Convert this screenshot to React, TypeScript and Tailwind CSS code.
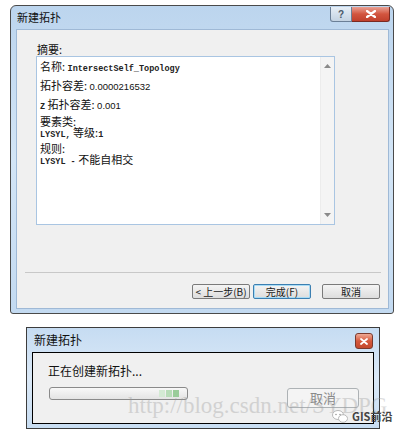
import React from "react";

const cjk = "font-['Noto_Sans_CJK_SC','Microsoft_YaHei',sans-serif]";
const mono = "font-['Liberation_Mono',monospace] font-bold text-[8.5px] text-[#222]";

const WinButton: React.FC<{ label: string; focused?: boolean; className?: string }> = ({
  label,
  focused,
  className,
}) => (
  <div
    className={
      "h-[15px] flex items-center justify-center rounded-[2px] border text-[10px] leading-none text-[#1a1a1a] bg-gradient-to-b from-[#f4f4f4] to-[#dddddd] " +
      (focused ? "border-[#3c7fb1] shadow-[inset_0_0_0_1px_#a8dcf6] " : "border-[#7a7a7a] ") +
      (className || "")
    }
  >
    {label}
  </div>
);

const SummaryBox: React.FC = () => (
  <div className="ml-[19px] w-[299px] h-[169px] border border-[#a9c5e2] bg-white flex">
    <div className={"flex-1 pl-[3px] pt-[3px] text-[11px] leading-[12px] text-[#111] " + cjk}>
      <div className="h-[12px] whitespace-nowrap">
        名称:&nbsp;<span className={mono}>IntersectSelf_Topology</span>
      </div>
      <div className="h-[12px] mt-[7px] whitespace-nowrap">
        拓扑容差:&nbsp;
        <span className="font-['Liberation_Sans',sans-serif] text-[9.5px]">0.0000216532</span>
      </div>
      <div className="h-[12px] mt-[7px] whitespace-nowrap">
        <span className={mono}>Z</span>&nbsp;拓扑容差:&nbsp;
        <span className="font-['Liberation_Sans',sans-serif] text-[9.5px]">0.001</span>
      </div>
      <div className="h-[11px] mt-[6px] leading-[11px]">要素类:</div>
      <div className="h-[11px] leading-[11px] whitespace-nowrap">
        <span className={mono}>LYSYL,</span>&nbsp;等级:<span className={mono}>1</span>
      </div>
      <div className="h-[11px] mt-[5px] leading-[11px]">规则:</div>
      <div className="h-[11px] leading-[11px] whitespace-nowrap">
        <span className={mono}>LYSYL -</span>&nbsp;不能自相交
      </div>
    </div>
    <div className="w-[14px] bg-[#f4f4f4] border-l border-[#ececec] flex flex-col items-center justify-between py-[7px]">
      <svg width="7" height="4" viewBox="0 0 7 4">
        <path d="M0 4 L3.5 0 L7 4 Z" fill="#8a8a8a" />
      </svg>
      <svg width="7" height="4" viewBox="0 0 7 4">
        <path d="M0 0 L3.5 4 L7 0 Z" fill="#8a8a8a" />
      </svg>
    </div>
  </div>
);

const MainDialog: React.FC = () => (
  <div className="ml-[10px] mt-[5px] w-[384px] h-[309px] rounded-t-[6px] rounded-b-[3px] border border-[#4a4a4a] bg-gradient-to-b from-[#bcd5ee] via-[#d3e5f6] to-[#c3daf1] flex flex-col">
    <div className="h-[23px] flex items-start justify-between">
      <div className={"pl-[6px] pt-[6px] text-[11px] leading-none text-[#111] " + cjk}>新建拓扑</div>
      <div className="flex mt-[1px] mr-[3px]">
        <div className="w-[22px] h-[15px] rounded-bl-[3px] border border-[#6b7f96] border-t-0 bg-gradient-to-b from-[#e6eef6] to-[#c4d3e2] flex items-center justify-center text-[10px] font-bold text-[#4a5868] font-['Liberation_Sans',sans-serif]">
          ?
        </div>
        <div className="w-[38px] h-[15px] rounded-br-[3px] border border-[#7a2a22] border-t-0 border-l-0 bg-gradient-to-b from-[#e8a093] via-[#d2553f] to-[#c0402c] flex items-center justify-center">
          <svg width="10" height="8" viewBox="0 0 10 8">
            <path d="M1 1 L9 7 M9 1 L1 7" stroke="#ffffff" strokeWidth="2.2" strokeLinecap="round" />
          </svg>
        </div>
      </div>
    </div>
    <div className="ml-[5px] w-[373px] h-[280px] border border-[#9fb9d6] bg-[#f0f0f0] flex flex-col">
      <div className={"ml-[20px] mt-[13px] h-[13px] text-[11px] leading-[13px] text-[#111] " + cjk}>摘要:</div>
      <SummaryBox />
      <div className="ml-[8px] mt-[47px] w-[356px] h-[2px] border-t border-[#c8c8c8] border-b-white" />
      <div className={"mt-[10px] mr-[8px] flex justify-end " + cjk}>
        <WinButton label="< 上一步(B)" className="w-[58px]" />
        <WinButton label="完成(F)" focused className="w-[58px] ml-[3px]" />
        <WinButton label="取消" className="w-[58px] ml-[11px]" />
      </div>
    </div>
  </div>
);

const ProgressDialog: React.FC = () => (
  <div className="ml-[26px] mt-[13px] w-[354px] h-[102px] border border-[#3c3c3c] bg-gradient-to-b from-[#c6dcf2] via-[#dbe9f7] to-[#c8ddf2] flex flex-col">
    <div className="h-[24px] flex items-start justify-between">
      <div className={"pl-[7px] pt-[6px] text-[12px] leading-none text-[#111] " + cjk}>新建拓扑</div>
      <div className="mt-[5px] mr-[6px] w-[18px] h-[16px] rounded-[3px] border border-[#7a3a2e] bg-gradient-to-b from-[#eeaa96] via-[#d5583c] to-[#c44a2e] flex items-center justify-center">
        <svg width="8" height="7" viewBox="0 0 8 7">
          <path d="M1 1 L7 6 M7 1 L1 6" stroke="#ffffff" strokeWidth="1.8" strokeLinecap="round" />
        </svg>
      </div>
    </div>
    <div className="ml-[5px] w-[342px] h-[72px] border border-black bg-[#f0f0f0] flex flex-col">
      <div className={"ml-[15px] mt-[11px] h-[14px] text-[12px] leading-[14px] text-[#111] " + cjk}>正在创建新拓扑...</div>
      <div className="mt-[9px] flex items-start justify-between">
        <div className="ml-[16px] w-[139px] h-[13px] rounded-[3px] border border-[#8a8a8a] bg-gradient-to-b from-[#f8f8f8] to-[#e4e4e4] flex items-center justify-end pr-[8px] gap-[1px]">
          <div className="w-[6px] h-[7px] bg-[#d4ead4]" />
          <div className="w-[6px] h-[7px] bg-[#b8dcb8]" />
          <div className="w-[6px] h-[7px] bg-[#9acc9a]" />
        </div>
        <div
          className={
            "mt-[1px] mr-[14px] w-[72px] h-[20px] rounded-[3px] border border-[#adb2b5] bg-[#f4f4f4] flex items-center justify-center text-[13px] text-[#8a8a8a] " +
            cjk
          }
        >
          取消
        </div>
      </div>
    </div>
  </div>
);

export default function App() {
  return (
    <div className="w-[399px] h-[431px] bg-white relative overflow-hidden flex flex-col">
      <MainDialog />
      <ProgressDialog />
      {/* blog watermark over the progress dialog */}
      <div className="absolute left-[128px] top-[394px] font-['Liberation_Serif',serif] text-[23px] leading-none text-[#9a9a9a] opacity-35 whitespace-nowrap pointer-events-none">
        http://blog.csdn.net/SYDPG
      </div>
      <div className="absolute left-[332px] top-[410px] flex items-center gap-[4px] pointer-events-none">
        <svg width="16" height="13" viewBox="0 0 16 13">
          <ellipse cx="6" cy="5" rx="5.5" ry="4.5" fill="#ffffff" stroke="#b8b8b8" strokeWidth="1" />
          <ellipse cx="11" cy="8.5" rx="4.5" ry="3.8" fill="#ffffff" stroke="#b8b8b8" strokeWidth="1" />
          <circle cx="4" cy="4.5" r="0.8" fill="#9a9a9a" />
          <circle cx="8" cy="4.5" r="0.8" fill="#9a9a9a" />
        </svg>
        <span className={"text-[11px] font-bold text-[#444] leading-none " + cjk}>GIS前沿</span>
      </div>
    </div>
  );
}
